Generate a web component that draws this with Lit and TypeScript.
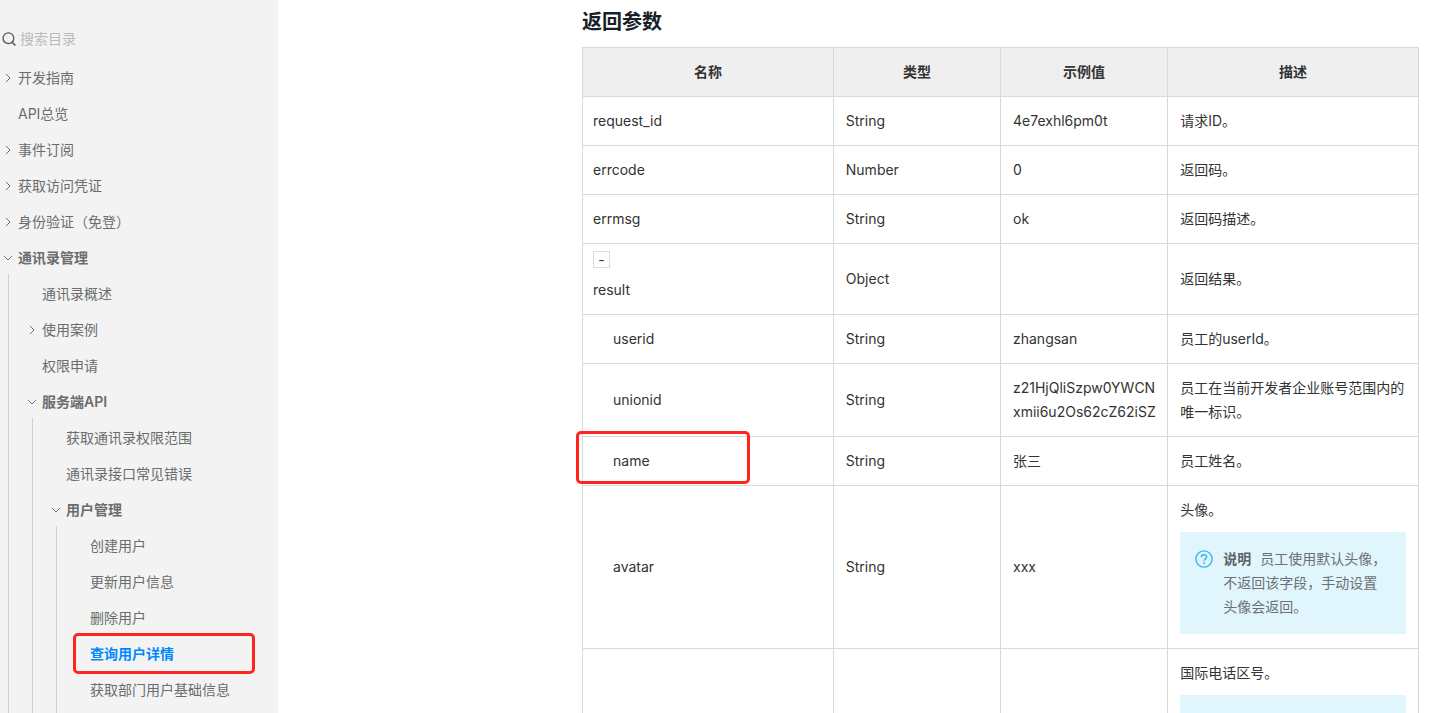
import { LitElement, html, css, svg, nothing, TemplateResult } from "lit";
import { customElement, property, state } from "lit/decorators.js";
import { classMap } from "lit/directives/class-map.js";

interface NavNode {
  label: string;
  children?: NavNode[];
  open?: boolean;
  active?: boolean;
}

interface Field {
  name: string;
  type: string;
  sample: string;
  desc: string;
  child?: boolean;
  group?: boolean;
  marked?: boolean;
  note?: string;
}

const NAV: NavNode[] = [
  { label: "开发指南", children: [] },
  { label: "API总览" },
  { label: "事件订阅", children: [] },
  { label: "获取访问凭证", children: [] },
  { label: "身份验证（免登）", children: [] },
  {
    label: "通讯录管理",
    open: true,
    children: [
      { label: "通讯录概述" },
      { label: "使用案例", children: [] },
      { label: "权限申请" },
      {
        label: "服务端API",
        open: true,
        children: [
          { label: "获取通讯录权限范围" },
          { label: "通讯录接口常见错误" },
          {
            label: "用户管理",
            open: true,
            children: [
              { label: "创建用户" },
              { label: "更新用户信息" },
              { label: "删除用户" },
              { label: "查询用户详情", active: true },
              { label: "获取部门用户基础信息" },
            ],
          },
        ],
      },
    ],
  },
];

const FIELDS: Field[] = [
  { name: "request_id", type: "String", sample: "4e7exhl6pm0t", desc: "请求ID。" },
  { name: "errcode", type: "Number", sample: "0", desc: "返回码。" },
  { name: "errmsg", type: "String", sample: "ok", desc: "返回码描述。" },
  { name: "result", type: "Object", sample: "", desc: "返回结果。", group: true },
  { name: "userid", type: "String", sample: "zhangsan", desc: "员工的userId。", child: true },
  {
    name: "unionid",
    type: "String",
    sample: "z21HjQliSzpw0YWCNxmii6u2Os62cZ62iSZ",
    desc: "员工在当前开发者企业账号范围内的唯一标识。",
    child: true,
  },
  { name: "name", type: "String", sample: "张三", desc: "员工姓名。", child: true, marked: true },
  {
    name: "avatar",
    type: "String",
    sample: "xxx",
    desc: "头像。",
    child: true,
    note: "员工使用默认头像，不返回该字段，手动设置头像会返回。",
  },
  { name: "", type: "", sample: "", desc: "国际电话区号。", child: true, note: "" },
];

@customElement("doc-nav")
export class DocNav extends LitElement {
  static styles = css`
    :host {
      display: block;
      box-sizing: border-box;
      background: #f3f3f3;
      color: #6a6d6d;
      font-size: 14px;
      line-height: 20px;
      overflow: hidden;
    }
    .search {
      display: flex;
      align-items: center;
      gap: 3px;
      height: 24px;
      margin: 27px 16px 9px 2px;
    }
    .search svg {
      flex: none;
      color: #555;
    }
    .search input {
      flex: 1;
      min-width: 0;
      padding: 0;
      border: 0;
      outline: 0;
      background: none;
      font: inherit;
      color: inherit;
    }
    .search input::placeholder {
      color: #bbb;
      opacity: 1;
    }
    ul {
      list-style: none;
      margin: 0;
      padding: 0;
    }
    .sub {
      margin: -2px 0 0 8px;
      padding: 2px 0 0 15px;
      border-left: 1px solid #d0d0d0;
    }
    .sub .sub .sub {
      padding-bottom: 36px;
    }
    .item {
      position: relative;
      display: flex;
      align-items: center;
      box-sizing: border-box;
      width: 100%;
      height: 36px;
      margin: 0;
      padding: 0;
      border: 0;
      background: none;
      font: inherit;
      color: inherit;
      text-align: left;
      text-decoration: none;
      white-space: nowrap;
      cursor: pointer;
    }
    .arrow {
      flex: none;
      display: flex;
      justify-content: center;
      width: 16px;
      margin-right: 2px;
    }
    .open {
      font-weight: 600;
    }
    .active {
      font-weight: 600;
      color: #0089ff;
    }
    .marker {
      position: absolute;
      inset: -3px 23px -2px 1px;
      border: 3px solid #ff2420;
      border-radius: 5px;
      pointer-events: none;
    }
  `;

  @property({ attribute: false }) items: NavNode[] = [];

  private toggle(node: NavNode) {
    node.open = !node.open;
    this.requestUpdate();
  }

  private arrow(open?: boolean) {
    return html`<svg width="12" height="12" viewBox="0 0 12 12" fill="none" stroke="#6c737a" stroke-width="1" aria-hidden="true">
      ${open ? svg`<path d="M2 4l4 4 4-4" />` : svg`<path d="M4 2l4 4-4 4" />`}
    </svg>`;
  }

  private renderNode(node: NavNode): TemplateResult {
    if (!node.children) {
      return html`<li>
        <a class=${classMap({ item: true, active: !!node.active })} href="#">
          <span class="arrow"></span>${node.label}${node.active ? html`<span class="marker"></span>` : nothing}
        </a>
      </li>`;
    }
    return html`<li>
      <button
        type="button"
        class=${classMap({ item: true, open: !!node.open })}
        aria-expanded=${node.open ? "true" : "false"}
        @click=${() => this.toggle(node)}
      >
        <span class="arrow">${this.arrow(node.open)}</span>${node.label}
      </button>
      ${node.open && node.children.length
        ? html`<ul class="sub">${node.children.map((c) => this.renderNode(c))}</ul>`
        : nothing}
    </li>`;
  }

  render() {
    return html`
      <label class="search">
        <svg width="15" height="15" viewBox="0 0 15 15" fill="none" stroke="currentColor" stroke-width="1.3" aria-hidden="true">
          <circle cx="6.4" cy="6.2" r="5.4" />
          <path d="M10.2 10.2l3.2 3.3" stroke-width="1.6" />
        </svg>
        <input type="text" placeholder="搜索目录" aria-label="搜索目录" />
      </label>
      <nav><ul>${this.items.map((n) => this.renderNode(n))}</ul></nav>
    `;
  }
}

@customElement("doc-note")
export class DocNote extends LitElement {
  static styles = css`
    :host {
      display: flex;
      gap: 10px;
      box-sizing: border-box;
      min-height: 102px;
      margin: 10px 0 2px;
      padding: 15px 16px 15px 15px;
      background: #e1f5fd;
      color: #6a7073;
    }
    svg {
      flex: none;
      margin-top: 3px;
    }
    .title {
      margin-right: 9px;
      color: #5c6366;
    }
  `;

  @property() text = "";

  render() {
    if (!this.text) return nothing;
    return html`
      <svg width="18" height="18" viewBox="0 0 18 18" fill="none" stroke="#35baec" stroke-width="1.4" aria-hidden="true">
        <circle cx="9" cy="9" r="8.1" />
        <path d="M6.4 7.2c0-1.5 1.1-2.4 2.6-2.4s2.6.9 2.6 2.2c0 1.7-2.5 1.9-2.5 3.8" stroke-width="1.6" />
        <circle cx="9.1" cy="13" r="1" fill="#35baec" stroke="none" />
      </svg>
      <span><strong class="title">说明</strong>${this.text}</span>
    `;
  }
}

@customElement("app-root")
export class AppRoot extends LitElement {
  static styles = css`
    :host {
      display: grid;
      grid-template-columns: 278px minmax(0, 1fr);
      height: 100vh;
      overflow: hidden;
      background: #fff;
      font-family: Inter, "Noto Sans CJK SC", sans-serif;
      font-size: 14px;
      color: #333;
    }
    main {
      min-width: 0;
      overflow: hidden;
      padding: 7px 15px 0 304px;
    }
    h2 {
      margin: 0 0 10px;
      font-size: 20px;
      line-height: 30px;
      font-weight: 600;
      color: #171f29;
    }
    table {
      width: 100%;
      table-layout: fixed;
      border-collapse: collapse;
      line-height: 24px;
    }
    .wide {
      width: 30%;
    }
    .narrow {
      width: 20%;
    }
    th,
    td {
      padding: 12px;
      border: 1px solid #d9d9d9;
      text-align: left;
      vertical-align: middle;
      overflow-wrap: anywhere;
    }
    th {
      background: #efefef;
      font-weight: 600;
      text-align: center;
    }
    .name {
      position: relative;
      padding-left: 10px;
    }
    .child {
      padding-left: 30px;
    }
    .group {
      padding-top: 7px;
    }
    .sample {
      padding-right: 8px;
    }
    .fold {
      display: flex;
      align-items: center;
      justify-content: center;
      width: 17px;
      height: 17px;
      margin: 0 0 10px;
      padding: 0;
      border: 1px solid #ddd;
      background: #fff;
      font: inherit;
      line-height: 15px;
      color: #333;
      cursor: pointer;
    }
    .marker {
      position: absolute;
      inset: -6px 83px 1px -7px;
      border: 3px solid #ff2420;
      border-radius: 5px;
      pointer-events: none;
    }
  `;

  @state() private folded = false;

  private row(f: Field) {
    if (f.child && this.folded) return nothing;
    return html`<tr>
      <td class=${classMap({ name: true, child: !!f.child, group: !!f.group })}>
        ${f.group
          ? html`<button type="button" class="fold" aria-label="展开或收起" @click=${() => (this.folded = !this.folded)}>
              ${this.folded ? "+" : "-"}
            </button>`
          : nothing}${f.name}${f.marked ? html`<span class="marker"></span>` : nothing}
      </td>
      <td>${f.type}</td>
      <td class="sample">${f.sample}</td>
      <td>${f.desc}${f.note === undefined ? nothing : html`<doc-note .text=${f.note}></doc-note>`}</td>
    </tr>`;
  }

  render() {
    return html`
      <doc-nav .items=${NAV}></doc-nav>
      <main>
        <h2>返回参数</h2>
        <table>
          <colgroup>
            <col class="wide" />
            <col class="narrow" />
            <col class="narrow" />
            <col class="wide" />
          </colgroup>
          <thead>
            <tr>
              <th>名称</th>
              <th>类型</th>
              <th>示例值</th>
              <th>描述</th>
            </tr>
          </thead>
          <tbody>
            ${FIELDS.map((f) => this.row(f))}
          </tbody>
        </table>
      </main>
    `;
  }
}
